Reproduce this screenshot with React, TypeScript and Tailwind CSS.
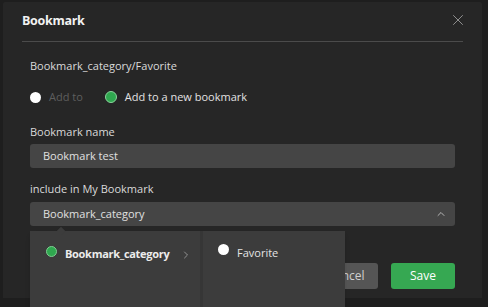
import { X, ChevronUp, ChevronRight } from "lucide-react";

export default function App() {
  return (
    <div
      className="w-[488px] h-[307px] overflow-hidden bg-[#1e1e1e] pt-[2px] pl-[3px]"
      style={{ fontFamily: '"Open Sans", "Noto Sans", sans-serif' }}
    >
      <div className="relative w-[479px] h-[296px] bg-[#262626] rounded-t-[2px]">
        {/* Header */}
        <div className="ml-[19px] w-[441px] h-[40px] flex items-center justify-between border-b border-[#4b4b4b]">
          <span className="text-[12.5px] font-bold text-[#f2f2f2] tracking-[-0.3px]">Bookmark</span>
          <X className="w-[18px] h-[18px] text-[#9a9a9a] mr-[-4px] mt-[-4px]" strokeWidth={1.2} />
        </div>

        {/* Body */}
        <div className="px-[27px] text-[11px] text-[#dadada]">
          <div className="mt-[14px] h-[20px] flex items-center">Bookmark_category/Favorite</div>

          <div className="mt-[11px] h-[20px] flex items-center">
            <span className="w-[11px] h-[11px] rounded-full bg-white" />
            <span className="ml-[8px] text-[#5e5e5e]">Add to</span>
            <span className="ml-[22px] w-[12px] h-[12px] rounded-full bg-[#2fa84f] border border-[#8bd49c]" />
            <span className="ml-[8px] text-[#e2e2e2]">Add to a new bookmark</span>
          </div>

          <div className="mt-[15px] h-[20px] flex items-center">Bookmark name</div>
          <div className="mt-[2px] h-[24px] rounded-[3px] bg-[#454545] flex items-center px-[13px] text-[#e0e0e0]">
            Bookmark test
          </div>

          <div className="mt-[11px] h-[20px] flex items-center">include in My Bookmark</div>
          <div className="relative mt-[3px]">
            <div className="h-[24px] rounded-[3px] bg-[#454545] flex items-center justify-between pl-[13px] pr-[8px] text-[#e0e0e0]">
              <span>Bookmark_category</span>
              <ChevronUp className="w-[12px] h-[12px] text-[#b5b5b5]" strokeWidth={2} />
            </div>

            {/* Dropdown overlay */}
            <div className="absolute left-0 top-[29px] z-10 w-[315px] h-[90px] bg-[#3c3c3c] flex shadow-md">
              <span className="absolute -top-[3px] left-[28px] w-[6px] h-[6px] rotate-45 bg-[#3c3c3c]" />
              <div className="w-[170px] flex items-start pt-[14px] pl-[16px] pr-[8px]">
                <span className="mt-[1px] w-[11px] h-[11px] rounded-full bg-[#2fa84f] border border-[#7fcf92]" />
                <span className="ml-[8px] font-bold text-[#ececec] text-[11px] tracking-[-0.3px] leading-[20px] mt-[-1px]">
                  Bookmark_category
                </span>
                <ChevronRight className="ml-auto mt-[4px] w-[12px] h-[12px] text-[#9a9a9a]" strokeWidth={1.8} />
              </div>
              <div className="w-[3px] bg-[#363636]" />
              <div className="flex-1 flex items-start pt-[13px] pl-[15px]">
                <span className="w-[11px] h-[11px] rounded-full bg-white" />
                <span className="ml-[8px] text-[#e4e4e4] leading-[20px] mt-[-1px]">Favorite</span>
              </div>
            </div>
          </div>

          {/* Footer buttons */}
          <div className="mt-[37px] flex justify-end gap-[13px]">
            <button className="w-[64px] h-[26px] rounded-[3px] bg-[#555555] text-[#d0d0d0] text-[12px]">Cancel</button>
            <button className="w-[64px] h-[26px] rounded-[3px] bg-[#36a852] text-white text-[12px]">Save</button>
          </div>
        </div>
      </div>
    </div>
  );
}
